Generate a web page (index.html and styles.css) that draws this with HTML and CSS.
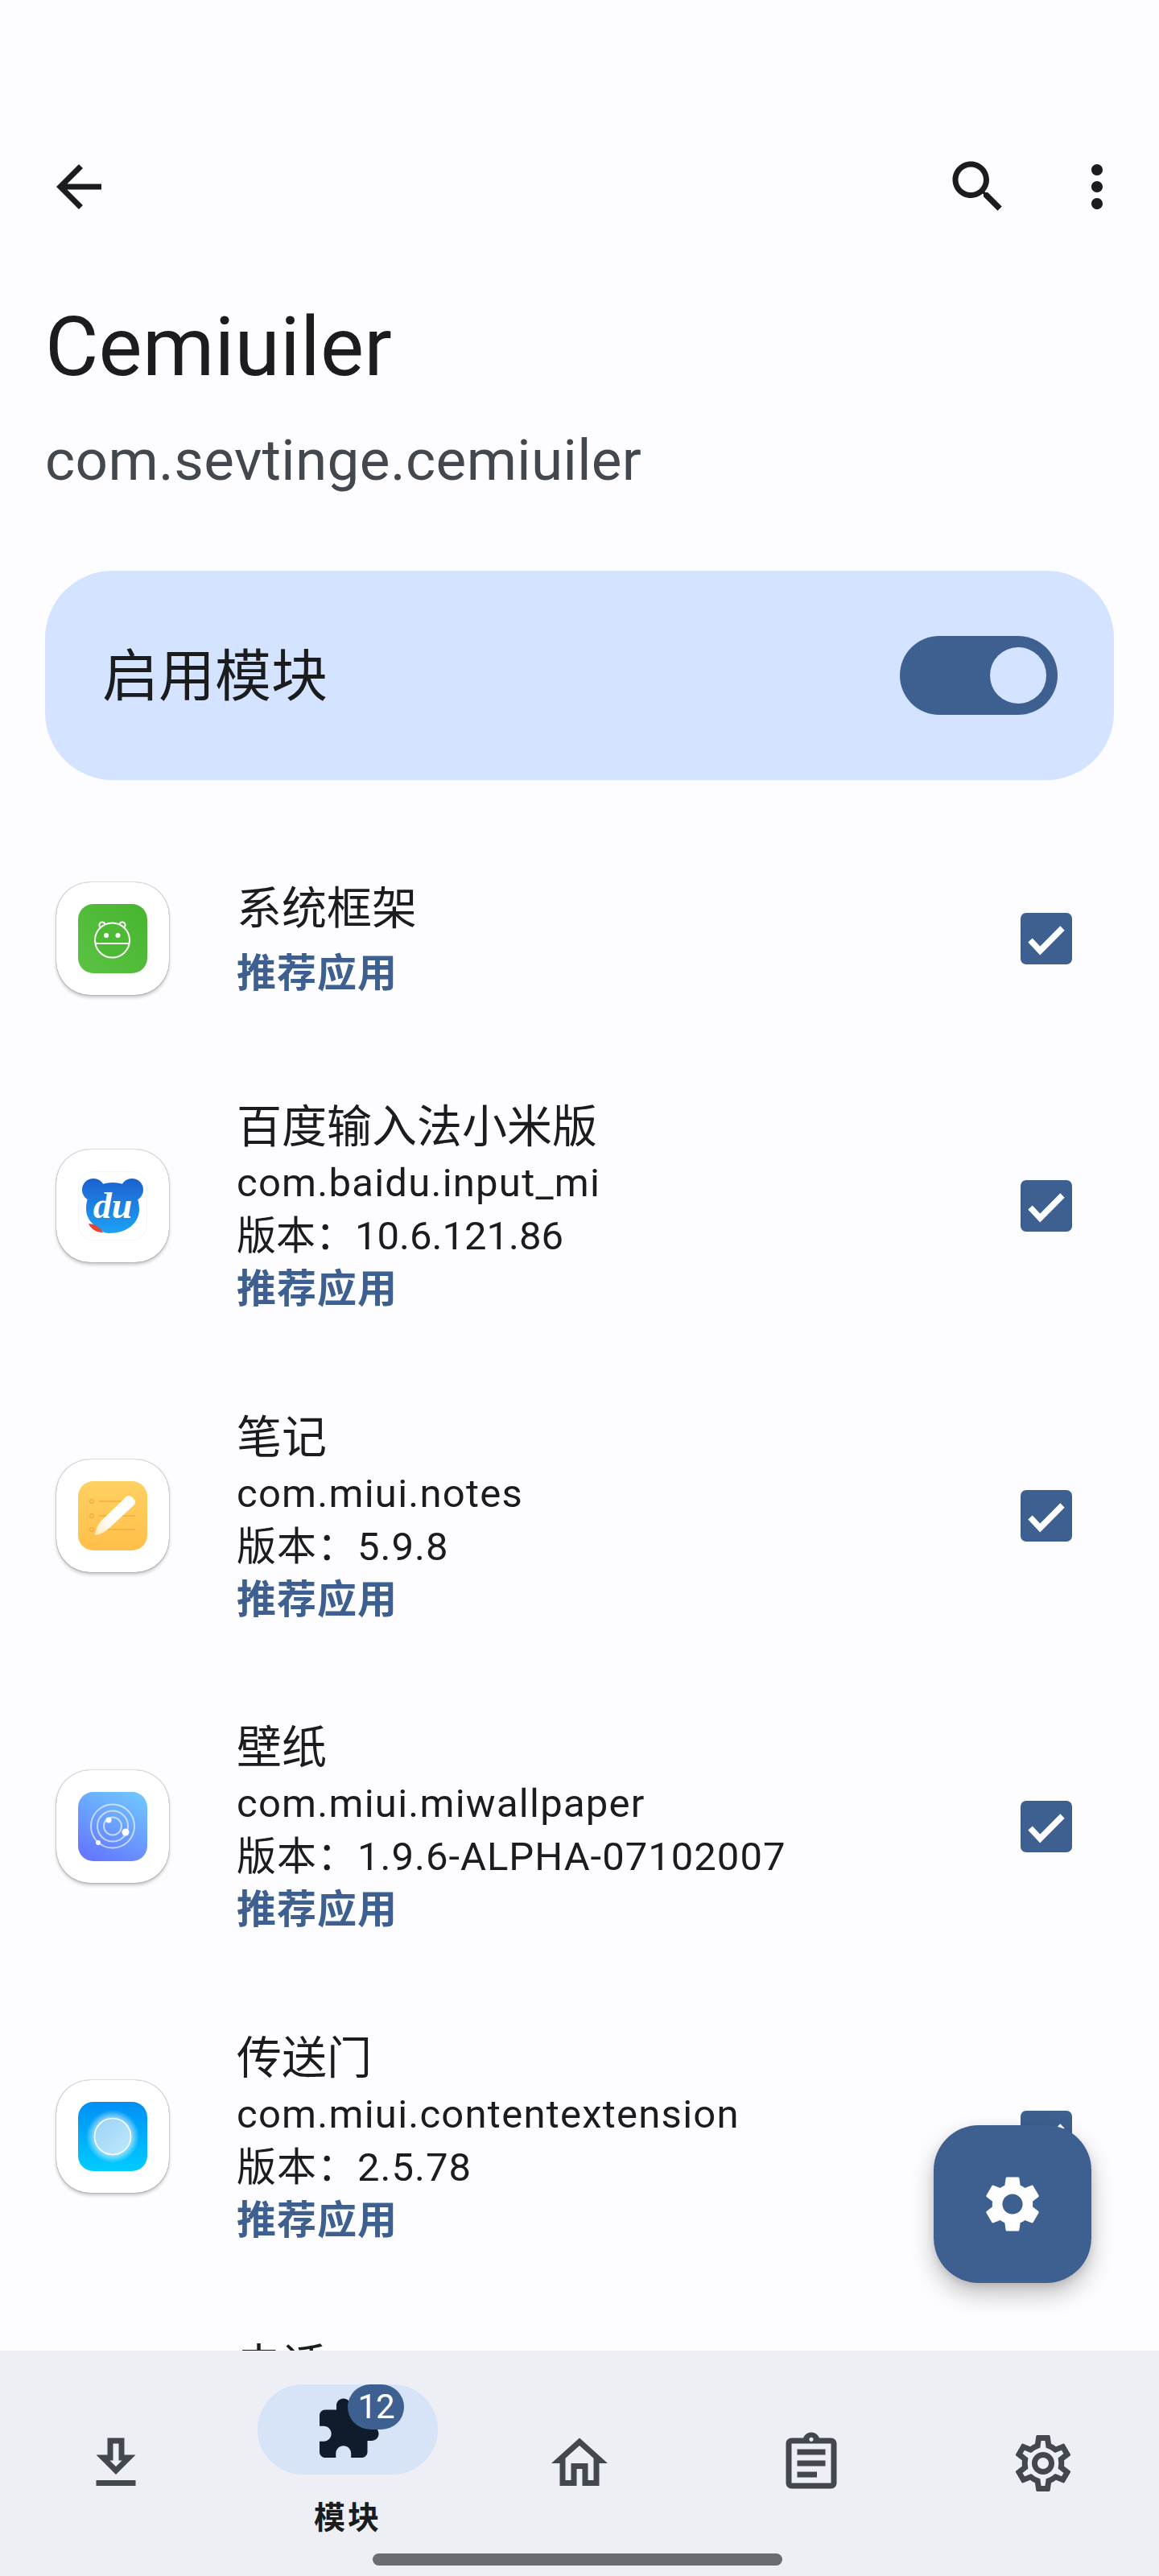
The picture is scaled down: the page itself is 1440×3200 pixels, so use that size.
FILE: index.html
```html
<!DOCTYPE html>
<html lang="zh-CN">
<head>
<meta charset="utf-8">
<title>Cemiuiler</title>
<link rel="stylesheet" href="styles.css">
</head>
<body>
<svg class="defs" width="0" height="0" aria-hidden="true">
  <symbol id="check" viewBox="0 0 64 64">
    <rect width="64" height="64" rx="7" fill="#3d6090"/>
    <path d="M12 34 24.3 47 52 19" fill="none" stroke="#fff" stroke-width="7.5"/>
  </symbol>
</svg>
<div class="screen">
  <main class="main">
    <header class="topbar">
      <svg class="icon" viewBox="0 0 24 24"><path d="M20 11H7.83l5.59-5.59L12 4l-8 8 8 8 1.41-1.41L7.83 13H20v-2z"/></svg>
      <div class="topbar-actions">
        <svg class="icon" viewBox="0 0 24 24"><path d="M15.5 14h-.79l-.28-.27C15.41 12.59 16 11.11 16 9.5 16 5.91 13.09 3 9.5 3S3 5.91 3 9.5 5.91 16 9.5 16c1.61 0 3.09-.59 4.23-1.57l.27.28v.79l5 4.99L20.49 19l-4.99-5zm-6 0C7.01 14 5 11.99 5 9.5S7.01 5 9.5 5 14 7.01 14 9.5 11.99 14 9.5 14z"/></svg>
        <svg class="icon" viewBox="0 0 24 24"><path d="M12 8c1.1 0 2-.9 2-2s-.9-2-2-2-2 .9-2 2 .9 2 2 2zm0 2c-1.1 0-2 .9-2 2s.9 2 2 2 2-.9 2-2-.9-2-2-2zm0 6c-1.1 0-2 .9-2 2s.9 2 2 2 2-.9 2-2-.9-2-2-2z"/></svg>
      </div>
    </header>

    <section class="heading">
      <h1 class="heading-title">Cemiuiler</h1>
      <p class="heading-sub">com.sevtinge.cemiuiler</p>
    </section>

    <section class="enable-card">
      <span class="enable-label">启用模块</span>
      <span class="switch"><span class="switch-thumb"></span></span>
    </section>

    <ul class="app-list">
      <li class="app-row app-row--short">
        <span class="tile">
          <svg class="tile-art" viewBox="0 0 86 86">
            <defs><linearGradient id="g1" x1="0" y1="1" x2="1" y2="0"><stop offset="0" stop-color="#5cc244"/><stop offset="1" stop-color="#46b52f"/></linearGradient></defs>
            <rect width="86" height="86" rx="19" fill="url(#g1)"/>
            <g fill="none" stroke="#fff" stroke-width="2">
              <circle cx="30" cy="26" r="3.6"/><circle cx="55" cy="26" r="3.6"/>
              <circle cx="42.5" cy="45" r="21.5" fill="#4dba36"/>
              <path d="M21 49H64"/>
            </g>
            <circle cx="35" cy="39" r="3" fill="#fff"/><circle cx="49.5" cy="39" r="3" fill="#fff"/>
          </svg>
        </span>
        <div class="app-text">
          <div class="app-name">系统框架</div>
          <div class="app-tag">推荐应用</div>
        </div>
        <svg class="check"><use href="#check"/></svg>
      </li>
      <li class="app-row">
        <span class="tile">
          <svg class="tile-art" viewBox="0 0 86 86">
            <defs><linearGradient id="g2" gradientUnits="userSpaceOnUse" x1="0" y1="10" x2="0" y2="77"><stop offset="0" stop-color="#1c62cf"/><stop offset="1" stop-color="#1ca2f6"/></linearGradient></defs>
            <rect x=".5" y=".5" width="85" height="85" rx="19" fill="#fff" stroke="#f4f5f7"/>
            <g fill="url(#g2)">
              <circle cx="19" cy="23" r="14"/><circle cx="67" cy="23" r="14"/>
              <path d="M43 14c22 0 33 14 33 33 0 18-16 30-38 30-5 0-9-3-12-6-9-5-16-13-16-24C10 28 21 14 43 14z"/>
            </g>
            <path fill="#e8432f" d="M13 65c7 0 14 4 18 11-8 0-15-4-18-11z"/>
            <text class="du" x="43" y="58" text-anchor="middle">du</text>
          </svg>
        </span>
        <div class="app-text">
          <div class="app-name">百度输入法小米版</div>
          <div class="app-line">com.baidu.input_mi</div>
          <div class="app-line app-line--tight">版本：10.6.121.86</div>
          <div class="app-tag">推荐应用</div>
        </div>
        <svg class="check"><use href="#check"/></svg>
      </li>
      <li class="app-row">
        <span class="tile">
          <svg class="tile-art" viewBox="0 0 86 86">
            <defs>
              <linearGradient id="g3" x1="0" y1="0" x2="0" y2="1"><stop offset="0" stop-color="#ffd163"/><stop offset="1" stop-color="#ffbf49"/></linearGradient>
              <linearGradient id="g3b" x1="1" y1="0" x2="0" y2="1"><stop offset="0" stop-color="#fff"/><stop offset=".6" stop-color="#fff"/><stop offset="1" stop-color="#ffe9bd"/></linearGradient>
            </defs>
            <rect width="86" height="86" rx="19" fill="url(#g3)"/>
            <g fill="none" stroke="#f4ae3b" stroke-width="1.4">
              <circle cx="17" cy="25" r="2.4"/><circle cx="17" cy="43" r="2.4"/><circle cx="17" cy="60" r="2.4"/>
              <path d="M26 25H71M26 43H71M26 60H71"/>
            </g>
            <path fill="url(#g3b)" d="M21 67c1-7 3-12 7-17l32-31c2-1.500 4-1.500 6 0l4 4c1.500 2 1.500 4 0 6L38 59c-5 4-10 7-17 8z"/>
          </svg>
        </span>
        <div class="app-text">
          <div class="app-name">笔记</div>
          <div class="app-line">com.miui.notes</div>
          <div class="app-line app-line--version">版本：5.9.8</div>
          <div class="app-tag">推荐应用</div>
        </div>
        <svg class="check"><use href="#check"/></svg>
      </li>
      <li class="app-row">
        <span class="tile">
          <svg class="tile-art" viewBox="0 0 86 86">
            <defs><linearGradient id="g4" x1=".75" y1="0" x2=".25" y2="1"><stop offset="0" stop-color="#6fc4ff"/><stop offset="1" stop-color="#6477ff"/></linearGradient></defs>
            <rect width="86" height="86" rx="19" fill="url(#g4)"/>
            <g fill="none" stroke="#fff" stroke-opacity=".62" stroke-width="2">
              <circle cx="43" cy="42.500" r="27"/><circle cx="43" cy="42.500" r="19"/><circle cx="43" cy="42.500" r="11"/>
            </g>
            <circle cx="38" cy="35" r="3.600" fill="#fff"/><circle cx="59" cy="50" r="4.500" fill="#fff"/><circle cx="25" cy="63" r="3" fill="#fff"/>
          </svg>
        </span>
        <div class="app-text">
          <div class="app-name">壁纸</div>
          <div class="app-line">com.miui.miwallpaper</div>
          <div class="app-line app-line--version">版本：1.9.6-ALPHA-07102007</div>
          <div class="app-tag">推荐应用</div>
        </div>
        <svg class="check"><use href="#check"/></svg>
      </li>
      <li class="app-row">
        <span class="tile">
          <svg class="tile-art" viewBox="0 0 86 86">
            <defs>
              <linearGradient id="g5" x1="0" y1="0" x2="0" y2="1"><stop offset="0" stop-color="#008ff5"/><stop offset="1" stop-color="#00ccff"/></linearGradient>
              <linearGradient id="g5b" x1="0" y1="0" x2="1" y2="1"><stop offset="0" stop-color="#9bd3f5"/><stop offset="1" stop-color="#bfe9fc"/></linearGradient>
              <radialGradient id="g5c"><stop offset=".7" stop-color="#fff" stop-opacity=".55"/><stop offset="1" stop-color="#fff" stop-opacity="0"/></radialGradient>
            </defs>
            <rect width="86" height="86" rx="19" fill="url(#g5)"/>
            <circle cx="43" cy="43" r="33" fill="url(#g5c)"/>
            <circle cx="43" cy="43" r="22.500" fill="url(#g5b)" stroke="#fff" stroke-width="1.600"/>
          </svg>
        </span>
        <div class="app-text">
          <div class="app-name">传送门</div>
          <div class="app-line">com.miui.contentextension</div>
          <div class="app-line app-line--version">版本：2.5.78</div>
          <div class="app-tag">推荐应用</div>
        </div>
        <svg class="check"><use href="#check"/></svg>
      </li>
      <li class="app-row app-row--clipped">
        <span class="tile"></span>
        <div class="app-text">
          <div class="app-name">电话</div>
        </div>
      </li>
    </ul>
  </main>

  <nav class="nav">
    <div class="nav-item">
      <svg class="icon icon--muted" viewBox="0 0 24 24"><path d="M19 9h-4V3H9v6H5l7 7 7-7zm-8 2V5h2v6h1.170L12 13.170 9.830 11H11zm-6 7h14v2H5z"/></svg>
    </div>
    <div class="nav-item nav-item--active">
      <span class="nav-pill">
        <svg class="icon icon--dark" viewBox="0 0 24 24"><path d="M20.500 11H19V7c0-1.100-.9-2-2-2h-4V3.500C13 2.120 11.880 1 10.500 1S8 2.120 8 3.500V5H4c-1.100 0-1.990.9-1.990 2v3.800H3.500c1.490 0 2.700 1.210 2.700 2.700s-1.210 2.700-2.700 2.700H2V20c0 1.100.9 2 2 2h3.800v-1.500c0-1.490 1.210-2.700 2.700-2.700 1.490 0 2.700 1.210 2.700 2.700V22H17c1.100 0 2-.9 2-2v-4h1.500c1.380 0 2.500-1.120 2.500-2.500S21.880 11 20.500 11z"/></svg>
        <span class="badge">12</span>
      </span>
      <span class="nav-label">模块</span>
    </div>
    <div class="nav-item">
      <svg class="icon icon--muted" viewBox="0 0 24 24"><path d="M12 5.690l5 4.500V18h-2v-6H9v6H7v-7.810l5-4.500M12 3L2 12h3v8h6v-6h2v6h6v-8h3L12 3z"/></svg>
    </div>
    <div class="nav-item">
      <svg class="icon icon--muted" viewBox="0 0 24 24"><path d="M7 15h7v2H7zm0-4h10v2H7zm0-4h10v2H7zm12-4h-4.180C14.400 1.840 13.300 1 12 1s-2.400.84-2.820 2H5c-1.100 0-2 .9-2 2v14c0 1.100.9 2 2 2h14c1.100 0 2-.9 2-2V5c0-1.100-.9-2-2-2zm-7-.25c.41 0 .75.34.75.75s-.34.75-.75.75-.75-.34-.75-.75.34-.75.75-.75zM19 19H5V5h14v14z"/></svg>
    </div>
    <div class="nav-item">
      <svg class="icon icon--muted" viewBox="0 0 24 24"><path d="M19.430 12.980c.04-.32.07-.64.07-.98 0-.34-.03-.66-.07-.98l2.110-1.650c.19-.15.24-.42.12-.64l-2-3.460c-.09-.16-.26-.25-.44-.25-.06 0-.12.01-.17.03l-2.490 1c-.52-.4-1.080-.73-1.690-.98l-.38-2.650C14.460 2.180 14.250 2 14 2h-4c-.25 0-.46.18-.49.42l-.38 2.650c-.61.25-1.170.59-1.690.98l-2.490-1c-.06-.02-.12-.03-.18-.03-.17 0-.34.09-.43.25l-2 3.460c-.13.22-.07.49.12.64l2.110 1.650c-.04.32-.07.65-.07.98 0 .33.03.66.07.98l-2.110 1.650c-.19.15-.24.42-.12.64l2 3.460c.09.16.26.25.44.25.06 0 .12-.01.17-.03l2.490-1c.52.4 1.080.73 1.690.98l.38 2.650c.03.24.24.42.49.42h4c.25 0 .46-.18.49-.42l.38-2.650c.61-.25 1.170-.59 1.690-.98l2.490 1c.06.02.12.03.18.03.17 0 .34-.09.43-.25l2-3.460c.12-.22.07-.49-.12-.64l-2.110-1.650zm-1.980-1.710c.04.31.05.52.05.73 0 .21-.02.43-.05.73l-.14 1.130.89.7 1.080.84-.7 1.210-1.270-.51-1.040-.42-.9.68c-.43.32-.84.56-1.250.73l-1.060.43-.16 1.130-.2 1.350h-1.400l-.19-1.350-.16-1.130-1.060-.43c-.43-.18-.83-.41-1.230-.71l-.91-.7-1.060.43-1.270.51-.7-1.210 1.080-.84.89-.7-.14-1.130c-.03-.31-.05-.54-.05-.74s.02-.43.05-.73l.14-1.130-.89-.7-1.080-.84.7-1.210 1.270.51 1.040.42.9-.68c.43-.32.84-.56 1.250-.73l1.060-.43.16-1.130.2-1.350h1.390l.19 1.350.16 1.130 1.060.43c.43.18.83.41 1.230.71l.91.7 1.060-.43 1.270-.51.7 1.210-1.070.85-.89.7.14 1.130zM12 8c-2.210 0-4 1.790-4 4s1.790 4 4 4 4-1.790 4-4-1.790-4-4-4zm0 6c-1.100 0-2-.9-2-2s.9-2 2-2 2 .9 2 2-.9 2-2 2z"/></svg>
    </div>
  </nav>

  <button class="fab" type="button" aria-label="设置">
    <svg class="icon icon--white" viewBox="0 0 24 24"><path d="M19.140 12.940c.04-.3.06-.61.06-.94 0-.32-.02-.64-.07-.94l2.030-1.580c.18-.14.23-.41.12-.61l-1.920-3.320c-.12-.22-.37-.29-.59-.22l-2.390.96c-.5-.38-1.030-.7-1.620-.94l-.36-2.540c-.04-.24-.24-.41-.48-.41h-3.840c-.24 0-.43.17-.47.41l-.36 2.540c-.59.24-1.130.57-1.620.94l-2.390-.96c-.22-.08-.47 0-.59.22L2.740 8.870c-.12.21-.08.47.12.61l2.030 1.580c-.05.3-.09.63-.09.94s.02.64.07.94l-2.030 1.580c-.18.14-.23.41-.12.61l1.920 3.320c.12.22.37.29.59.22l2.390-.96c.5.38 1.030.7 1.620.94l.36 2.540c.05.24.24.41.48.41h3.840c.24 0 .44-.17.47-.41l.36-2.540c.59-.24 1.130-.56 1.620-.94l2.390.96c.22.08.47 0 .59-.22l1.920-3.320c.12-.22.07-.47-.12-.61l-2.010-1.580zM12 15.600c-1.980 0-3.600-1.620-3.600-3.600s1.620-3.600 3.600-3.600 3.600 1.620 3.600 3.600-1.620 3.600-3.600 3.600z"/></svg>
  </button>

  <div class="home-bar"></div>
</div>
</body>
</html>
```

FILE: styles.css
```css
* { box-sizing: border-box; }
html, body { margin: 0; padding: 0; }
body {
  background: #fdfcff;
  color: #1a1c1e;
  font-family: Roboto, "Noto Sans CJK SC", sans-serif;
}
.defs { position: absolute; }
.screen {
  position: relative;
  width: 1440px;
  height: 3200px;
  display: flex;
  flex-direction: column;
  overflow: hidden;
}
.main { flex: 1; min-height: 0; overflow: hidden; }

.icon { width: 84px; height: 84px; display: block; fill: #1a1c1e; flex: none; }
.icon--muted { fill: #43474e; }
.icon--dark { fill: #101c2b; }
.icon--white { fill: #fff; }

.topbar {
  display: flex;
  justify-content: space-between;
  padding: 190px 35px 0 56px;
}
.topbar-actions { display: flex; gap: 64px; }

.heading { padding: 92px 56px 0; }
.heading-title {
  margin: 0;
  font-size: 102px;
  line-height: 130px;
  font-weight: 400;
  letter-spacing: .2px;
}
.heading-sub {
  margin: 31px 0 0;
  font-size: 71px;
  line-height: 90px;
  font-weight: 400;
  letter-spacing: .4px;
  color: #43474e;
}

.enable-card {
  display: flex;
  align-items: center;
  justify-content: space-between;
  height: 260px;
  margin: 92px 56px 0;
  padding: 0 70px 0 71px;
  border-radius: 84px;
  background: #d4e3ff;
}
.enable-label { font-size: 70px; line-height: 90px; padding-top: 4px; }
.switch {
  display: flex;
  align-items: center;
  justify-content: flex-end;
  width: 196px;
  height: 98px;
  padding-right: 14px;
  border-radius: 49px;
  background: #3d6090;
}
.switch-thumb { width: 70px; height: 70px; border-radius: 50%; background: #d4e3ff; }

.app-list { list-style: none; margin: 58px 0 0; padding: 0; }
.app-row {
  display: flex;
  align-items: center;
  padding: 55.25px 108px 55.25px 70px;
}
.app-row--short { height: 278px; }
.app-row--short .app-name { margin-bottom: 10.5px; }
.app-row--clipped { align-items: flex-start; }
.app-row--clipped .app-text { padding-top: 1px; }
.app-row--clipped .tile { margin-top: 65px; }
.tile {
  flex: none;
  display: flex;
  align-items: center;
  justify-content: center;
  width: 140px;
  height: 140px;
  border-radius: 42px;
  background: #fff;
  box-shadow: 0 0 1.5px rgba(0, 0, 0, .55), 0 3px 4px rgba(0, 0, 0, .22);
}
.tile-art { width: 86px; height: 86px; display: block; }
.du { font: italic 700 46px "Liberation Serif", serif; fill: #fff; }
.app-text { flex: 1; min-width: 0; margin-left: 84px; padding-top: 4px; }
.app-name { font-size: 56px; line-height: 73px; }
.app-line { font-size: 49px; line-height: 66px; letter-spacing: 1.25px; }
.app-line--version { letter-spacing: 1px; }
.app-line--tight { letter-spacing: 0; }
.app-tag { font-size: 49px; line-height: 66px; font-weight: 700; letter-spacing: 1px; color: #3d6090; }
.check { flex: none; width: 64px; height: 64px; display: block; }

.nav {
  flex: none;
  height: 280px;
  display: grid;
  grid-template-columns: repeat(5, 288px);
  background: #eeeff4;
}
.nav-item {
  display: flex;
  flex-direction: column;
  align-items: center;
  justify-content: center;
}
.nav-item--active { justify-content: flex-start; padding-top: 42px; }
.nav-pill {
  position: relative;
  display: flex;
  align-items: center;
  justify-content: center;
  width: 224px;
  height: 112px;
  border-radius: 56px;
  background: #d7e3f7;
}
.badge {
  position: absolute;
  left: 112px;
  top: 0;
  width: 70px;
  height: 56px;
  border-radius: 28px;
  background: #3d6090;
  color: #fff;
  font-size: 42px;
  line-height: 56px;
  letter-spacing: -1px;
  text-align: center;
}
.nav-label {
  margin-top: 34px;
  font-size: 39px;
  line-height: 40px;
  font-weight: 700;
  letter-spacing: 3px;
}

.fab {
  position: absolute;
  left: 1160px;
  top: 2640px;
  display: flex;
  align-items: center;
  justify-content: center;
  width: 196px;
  height: 196px;
  padding: 0;
  border: 0;
  border-radius: 56px;
  background: #3d6090;
  box-shadow: 0 14px 30px rgba(0, 0, 0, .24), 0 4px 10px rgba(0, 0, 0, .1);
}
.home-bar {
  position: absolute;
  left: 463px;
  top: 3172px;
  width: 509px;
  height: 15px;
  border-radius: 8px;
  background: #6b6c70;
}
```
